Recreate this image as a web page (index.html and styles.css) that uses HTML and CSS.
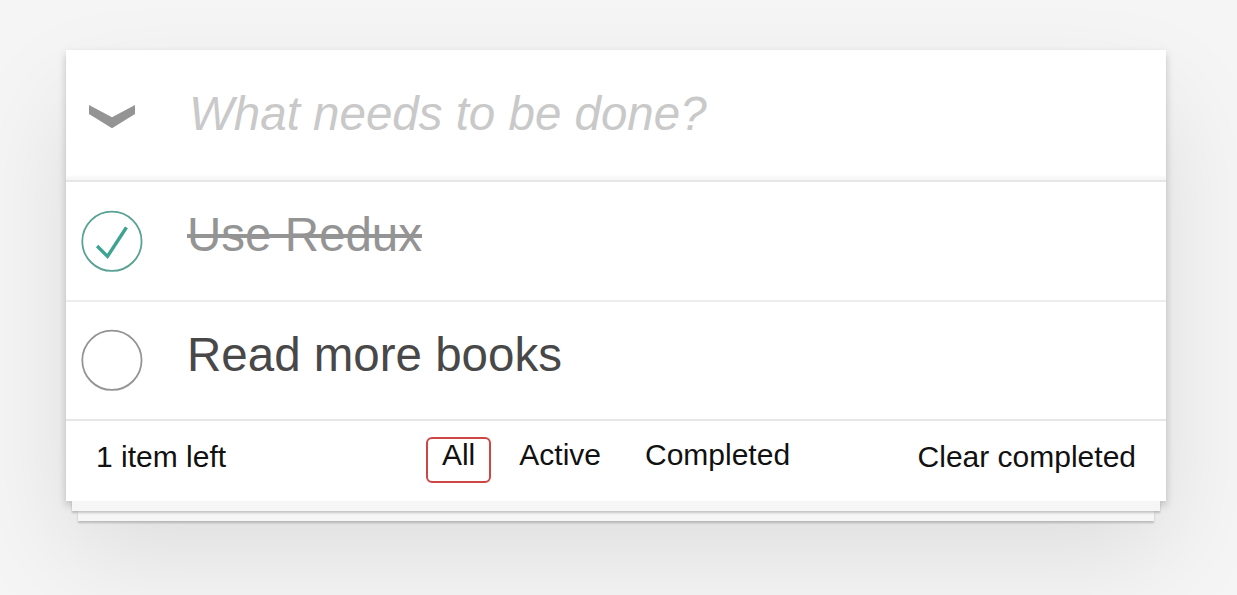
FILE: index.html
```html
<!DOCTYPE html>
<html lang="en">
<head>
    <meta charset="UTF-8">
    <title>Redux TodoMVC</title>
    <link rel="stylesheet" href="styles.css">
</head>
<body>
    <section class="todoapp">
        <div class="card">
            <header class="header">
                <div class="toggle-all">
                    <svg width="46" height="24" viewBox="0 0 46 24">
                        <polygon points="0,0 23,12.3 46,0 46,9 23,23.3 0,9" fill="#949494"/>
                    </svg>
                </div>
                <input class="new-todo" type="text" placeholder="What needs to be done?">
            </header>

            <ul class="todo-list">
                <li class="completed">
                    <svg class="toggle" width="80" height="80" viewBox="-10 -18 100 135">
                        <circle cx="50" cy="50" r="50" fill="none" stroke="#59A193" stroke-width="3"/>
                        <path fill="#3EA390" d="M72 25L42 71 27 56l-4 4 20 20 34-52z"/>
                    </svg>
                    <label>Use Redux</label>
                </li>
                <li>
                    <svg class="toggle" width="80" height="80" viewBox="-10 -18 100 135">
                        <circle cx="50" cy="50" r="50" fill="none" stroke="#949494" stroke-width="3"/>
                    </svg>
                    <label>Read more books</label>
                </li>
            </ul>

            <footer class="footer">
                <span class="todo-count"><strong>1</strong> item left</span>
                <ul class="filters">
                    <li><a href="#/" class="selected">All</a></li>
                    <li><a href="#/active">Active</a></li>
                    <li><a href="#/completed">Completed</a></li>
                </ul>
                <button class="clear-completed">Clear completed</button>
            </footer>
        </div>
        <!-- pages stacked under the list -->
        <div class="sheet sheet-1"></div>
        <div class="sheet sheet-2"></div>
    </section>
</body>
</html>
```

FILE: styles.css
```css
html {
    height: 100%;
}
body {
    font-family: 'Liberation Sans', Arial, sans-serif;
    background-color: #f5f5f5;
    color: #111111;
    margin: 0;
    padding: 50px 0 0 66px;
    min-height: 100%;
    box-sizing: border-box;
}
.todoapp {
    width: 1100px;
}
.card {
    background-color: #ffffff;
    box-shadow: 0 4px 8px 0 rgba(0, 0, 0, 0.2), 0 50px 100px 0 rgba(0, 0, 0, 0.1);
}
.header {
    display: flex;
    align-items: center;
    height: 130px;
    box-shadow: inset 0 -4px 2px rgba(0, 0, 0, 0.03);
}
.toggle-all {
    width: 120px;
    padding-left: 23px;
    padding-top: 3px;
    box-sizing: border-box;
    display: flex;
}
.new-todo {
    flex: 1;
    height: 130px;
    border: none;
    outline: none;
    padding: 0 32px 3px 3px;
    box-sizing: border-box;
    background: transparent;
    font-family: inherit;
    font-size: 47.5px;
    color: #484848;
}
.new-todo::placeholder {
    font-style: italic;
    color: #c9c9c9;
}
.todo-list {
    list-style: none;
    margin: 0;
    padding: 0;
    border-top: 2px solid #e6e6e6;
}
.todo-list li {
    display: flex;
    align-items: center;
    border-bottom: 2px solid #ededed;
}
.todo-list li:last-child {
    border-bottom: none;
}
.toggle {
    flex: none;
}
.todo-list label {
    display: block;
    padding: 24px 30px 36px 41px;
    font-size: 47.5px;
    line-height: 57.6px;
    color: #484848;
}
.todo-list li.completed label {
    color: #949494;
    text-decoration: line-through;
}
.footer {
    display: grid;
    grid-template-columns: 1fr auto 1fr;
    align-items: start;
    padding: 16px 30px 18px;
    border-top: 2px solid #e6e6e6;
    font-size: 30px;
    line-height: 30px;
    color: #111111;
}
.todo-count {
    padding-top: 5px;
}
.todo-count strong {
    font-weight: normal;
}
.filters {
    list-style: none;
    margin: 0;
    padding: 0;
    display: flex;
    gap: 12px;
}
.filters a {
    display: block;
    color: inherit;
    text-decoration: none;
    padding: 1px 14px 11px;
    border: 2px solid transparent;
    border-radius: 6px;
}
.filters a.selected {
    border-color: #ce4646;
}
.clear-completed {
    justify-self: end;
    padding: 5px 0 0;
    margin: 0;
    border: none;
    background: none;
    font-family: inherit;
    font-size: 30px;
    line-height: 30px;
    color: inherit;
    cursor: pointer;
}
.sheet {
    height: 10px;
    background-color: #f6f6f6;
    box-shadow: 0 2px 2px rgba(0, 0, 0, 0.2);
}
.sheet-1 {
    margin: 0 6px;
    position: relative;
    z-index: 1;
}
.sheet-2 {
    margin: 0 12px;
}
```
